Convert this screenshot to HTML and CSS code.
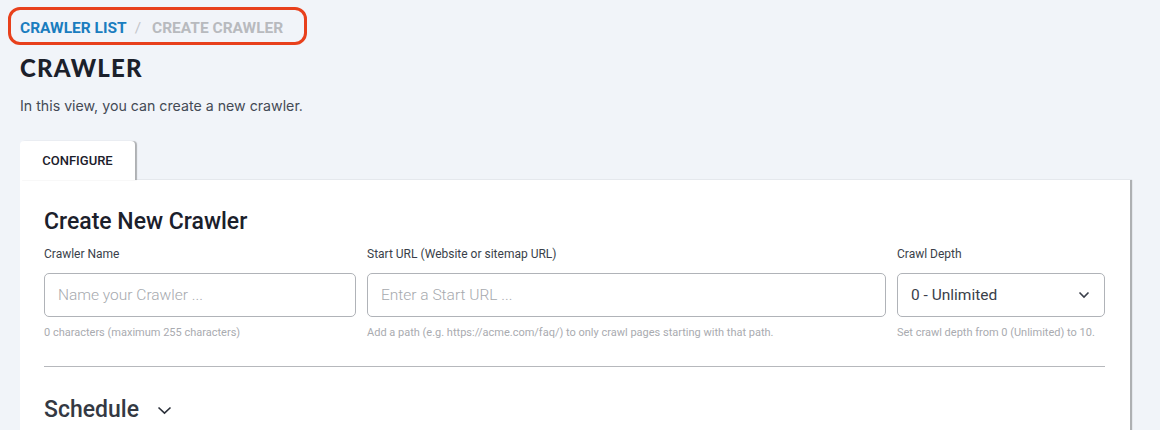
FILE: index.html
```html
<!DOCTYPE html>
<html lang="en">
<head>
  <meta charset="UTF-8">
  <title>Create Crawler</title>
  <link rel="stylesheet" href="styles.css">
</head>
<body>
  <div class="page">
    <nav class="breadcrumb">
      <a href="#" class="crumb-link">CRAWLER LIST</a>
      <span class="crumb-sep">/</span>
      <span class="crumb-current">CREATE CRAWLER</span>
    </nav>

    <h1 class="page-title">CRAWLER</h1>
    <p class="page-desc">In this view, you can create a new crawler.</p>

    <div class="tabs">
      <div class="tab active">CONFIGURE</div>
    </div>

    <div class="card">
      <h2 class="card-title">Create New Crawler</h2>

      <div class="fields">
        <div class="field field-name">
          <label for="crawlerName">Crawler Name</label>
          <input type="text" id="crawlerName" placeholder="Name your Crawler ...">
          <div class="hint">0 characters (maximum 255 characters)</div>
        </div>
        <div class="field field-url">
          <label for="startUrl">Start URL (Website or sitemap URL)</label>
          <input type="text" id="startUrl" placeholder="Enter a Start URL ...">
          <div class="hint">Add a path (e.g. https://acme.com/faq/) to only crawl pages starting with that path.</div>
        </div>
        <div class="field field-depth">
          <label>Crawl Depth</label>
          <div class="select">
            <span>0 - Unlimited</span>
            <svg width="12" height="8" viewBox="0 0 12 8"><path d="M1.5 1.5 L6 6 L10.5 1.5" fill="none" stroke="#3a3f4a" stroke-width="1.6"/></svg>
          </div>
          <div class="hint">Set crawl depth from 0 (Unlimited) to 10.</div>
        </div>
      </div>

      <hr class="divider">

      <div class="section-head">
        <h3>Schedule</h3>
        <svg width="15" height="9" viewBox="0 0 15 9"><path d="M1.5 1.5 L7.5 7.2 L13.5 1.5" fill="none" stroke="#2b303a" stroke-width="1.6"/></svg>
      </div>
    </div>
  </div>
</body>
</html>
```

FILE: styles.css
```css
* {
  box-sizing: border-box;
}

body {
  margin: 0;
  font-family: Inter, "Noto Sans", sans-serif;
  background-color: #f1f4f9;
  color: #2b303a;
}

.page {
  padding: 7px 30px 0 20px;
}

.breadcrumb {
  display: inline-flex;
  align-items: center;
  margin-left: -12px;
  padding: 3px 21px 0 9px;
  height: 38px;
  border: 3px solid #e8401c;
  border-radius: 12px;
  font-family: Roboto, sans-serif;
  font-weight: 700;
  font-size: 15.5px;
}

.crumb-link {
  color: #1a7dbf;
  text-decoration: none;
}

.crumb-sep {
  color: #c4c6ca;
  font-weight: 400;
  margin: 0 11px 0 8px;
}

.crumb-current {
  color: #b8babe;
}

.page-title {
  margin: 9px 0 0;
  font-family: Lato, sans-serif;
  font-weight: 900;
  font-size: 24px;
  letter-spacing: 1.2px;
  color: #1b202b;
  line-height: 28px;
}

.page-desc {
  margin: 15px 0 0;
  font-size: 14.2px;
  color: #444a55;
  line-height: 18px;
}

.tabs {
  display: flex;
  margin-top: 26px;
}

.tab {
  width: 115px;
  height: 39px;
  display: flex;
  align-items: center;
  justify-content: center;
  background: #fff;
  border-radius: 4px 4px 0 0;
  box-shadow: 2px 0 1px rgba(0, 0, 0, 0.28);
  font-family: Roboto, sans-serif;
  font-size: 13px;
  font-weight: 500;
  color: #1b202b;
}

.card {
  background: #fff;
  width: 1110px;
  padding: 28px 25px 14px 24px;
  box-shadow: 2px 0 1px rgba(0, 0, 0, 0.28);
}

.card-title {
  margin: 0;
  font-family: Roboto, sans-serif;
  font-weight: 500;
  font-size: 23px;
  color: #1b202b;
  line-height: 28px;
}

.fields {
  display: flex;
  gap: 11px;
  margin-top: 10px;
}

.field {
  display: flex;
  flex-direction: column;
}

.field-name {
  width: 312px;
}

.field-url {
  width: 519px;
}

.field-depth {
  width: 208px;
}

.field label {
  font-family: Roboto, sans-serif;
  font-size: 12px;
  color: #3a3f4a;
  line-height: 16px;
  margin-bottom: 11px;
}

.field input,
.select {
  height: 44px;
  border: 1px solid #b0b3b8;
  border-radius: 5px;
  padding: 0 13px;
  font-family: Roboto, sans-serif;
  font-size: 15.5px;
  font-weight: 300;
  color: #3a3f4a;
}

.field input::placeholder {
  color: #a6a9ae;
}

.select {
  display: flex;
  align-items: center;
  justify-content: space-between;
  padding: 0 14px 0 13px;
  font-weight: 400;
}

.hint {
  margin-top: 10px;
  font-family: Roboto, sans-serif;
  font-size: 11px;
  color: #a9abb0;
  line-height: 12px;
}

.divider {
  border: none;
  border-top: 1px solid #b6b8bc;
  margin: 27px 0 0;
}

.section-head {
  display: flex;
  align-items: center;
  gap: 18px;
  margin-top: 30px;
}

.section-head h3 {
  margin: 0;
  font-family: Roboto, sans-serif;
  font-weight: 500;
  font-size: 23px;
  color: #343943;
  line-height: 26px;
}
```
